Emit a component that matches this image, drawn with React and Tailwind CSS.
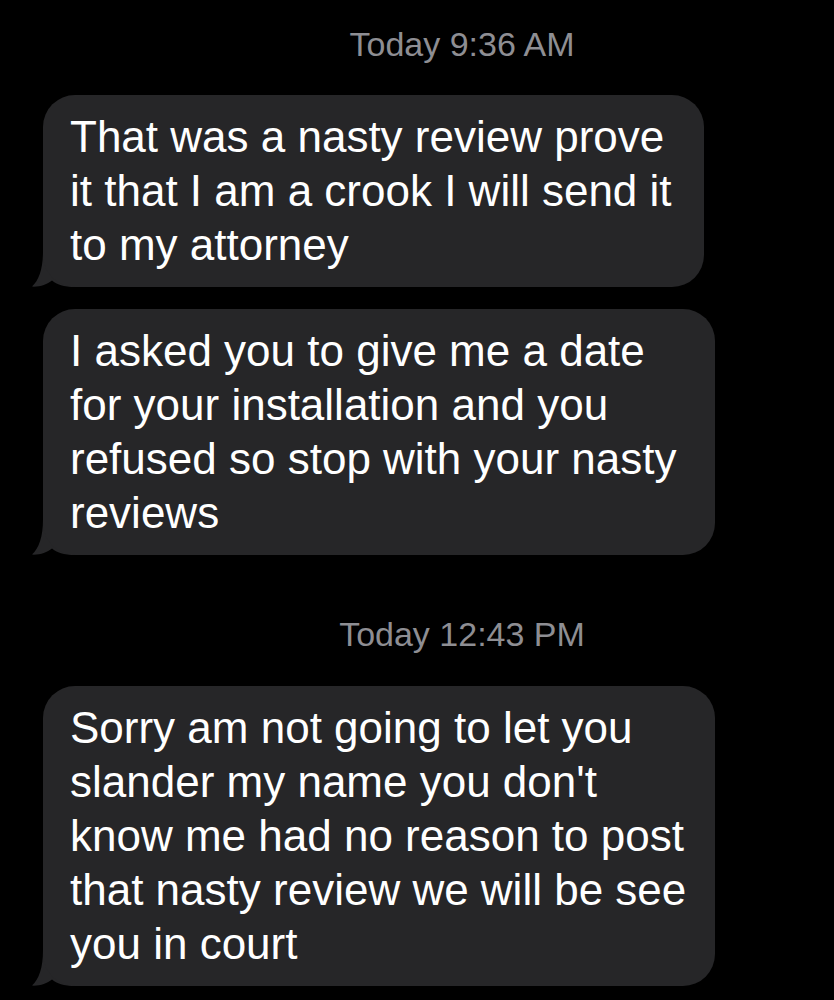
const messages = [
  { type: 'time', text: 'Today 9:36 AM', mt: 'pt-[24px]' },
  {
    type: 'bubble',
    width: 'w-[661px]',
    mt: 'mt-[31px]',
    lines: ['That was a nasty review prove', 'it that I am a crook I will send it', 'to my attorney'],
  },
  {
    type: 'bubble',
    width: 'w-[672px]',
    mt: 'mt-[22px]',
    lines: [
      'I asked you to give me a date',
      'for your installation and you',
      'refused so stop with your nasty',
      'reviews',
    ],
  },
  { type: 'time', text: 'Today 12:43 PM', mt: 'mt-[59px]' },
  {
    type: 'bubble',
    width: 'w-[672px]',
    mt: 'mt-[32px]',
    lines: [
      'Sorry am not going to let you',
      "slander my name you don't",
      'know me had no reason to post',
      'that nasty review we will be see',
      'you in court',
    ],
  },
];

// iMessage tail, sits behind the bubble at the bottom-left corner
const Tail = () => (
  <svg
    className="absolute left-[-11px] bottom-0"
    width="44"
    height="36"
    viewBox="0 0 44 36"
  >
    <path
      d="M11 0 C11 18 7 29 0 35.6 C8 36 15 33.5 20 29.5 C25 33.5 31 36 44 36 L44 0 Z"
      fill="#262628"
    />
  </svg>
);

const Bubble = ({ lines, width, mt }) => (
  <div className={`${mt} ml-[43px] relative ${width}`}>
    <Tail />
    <div className="relative rounded-[32px] bg-[#262628] pl-[27px] pr-4 py-[15px] text-[44px] leading-[54px] text-white">
      {lines.map((l, i) => (
        <div key={i} className="whitespace-nowrap">
          {l}
        </div>
      ))}
    </div>
  </div>
);

const Timestamp = ({ text, mt }) => (
  <div className={`${mt} flex justify-center pl-[90px] text-[34px] leading-[40px] text-[#8e8e93]`}>
    {text}
  </div>
);

export default function App() {
  return (
    <div
      className="h-[1000px] w-full overflow-hidden bg-black"
      style={{ fontFamily: '"Liberation Sans", Arial, sans-serif' }}
    >
      {messages.map((m, i) =>
        m.type === 'time' ? (
          <Timestamp key={i} text={m.text} mt={m.mt} />
        ) : (
          <Bubble key={i} lines={m.lines} width={m.width} mt={m.mt} />
        )
      )}
    </div>
  );
}
